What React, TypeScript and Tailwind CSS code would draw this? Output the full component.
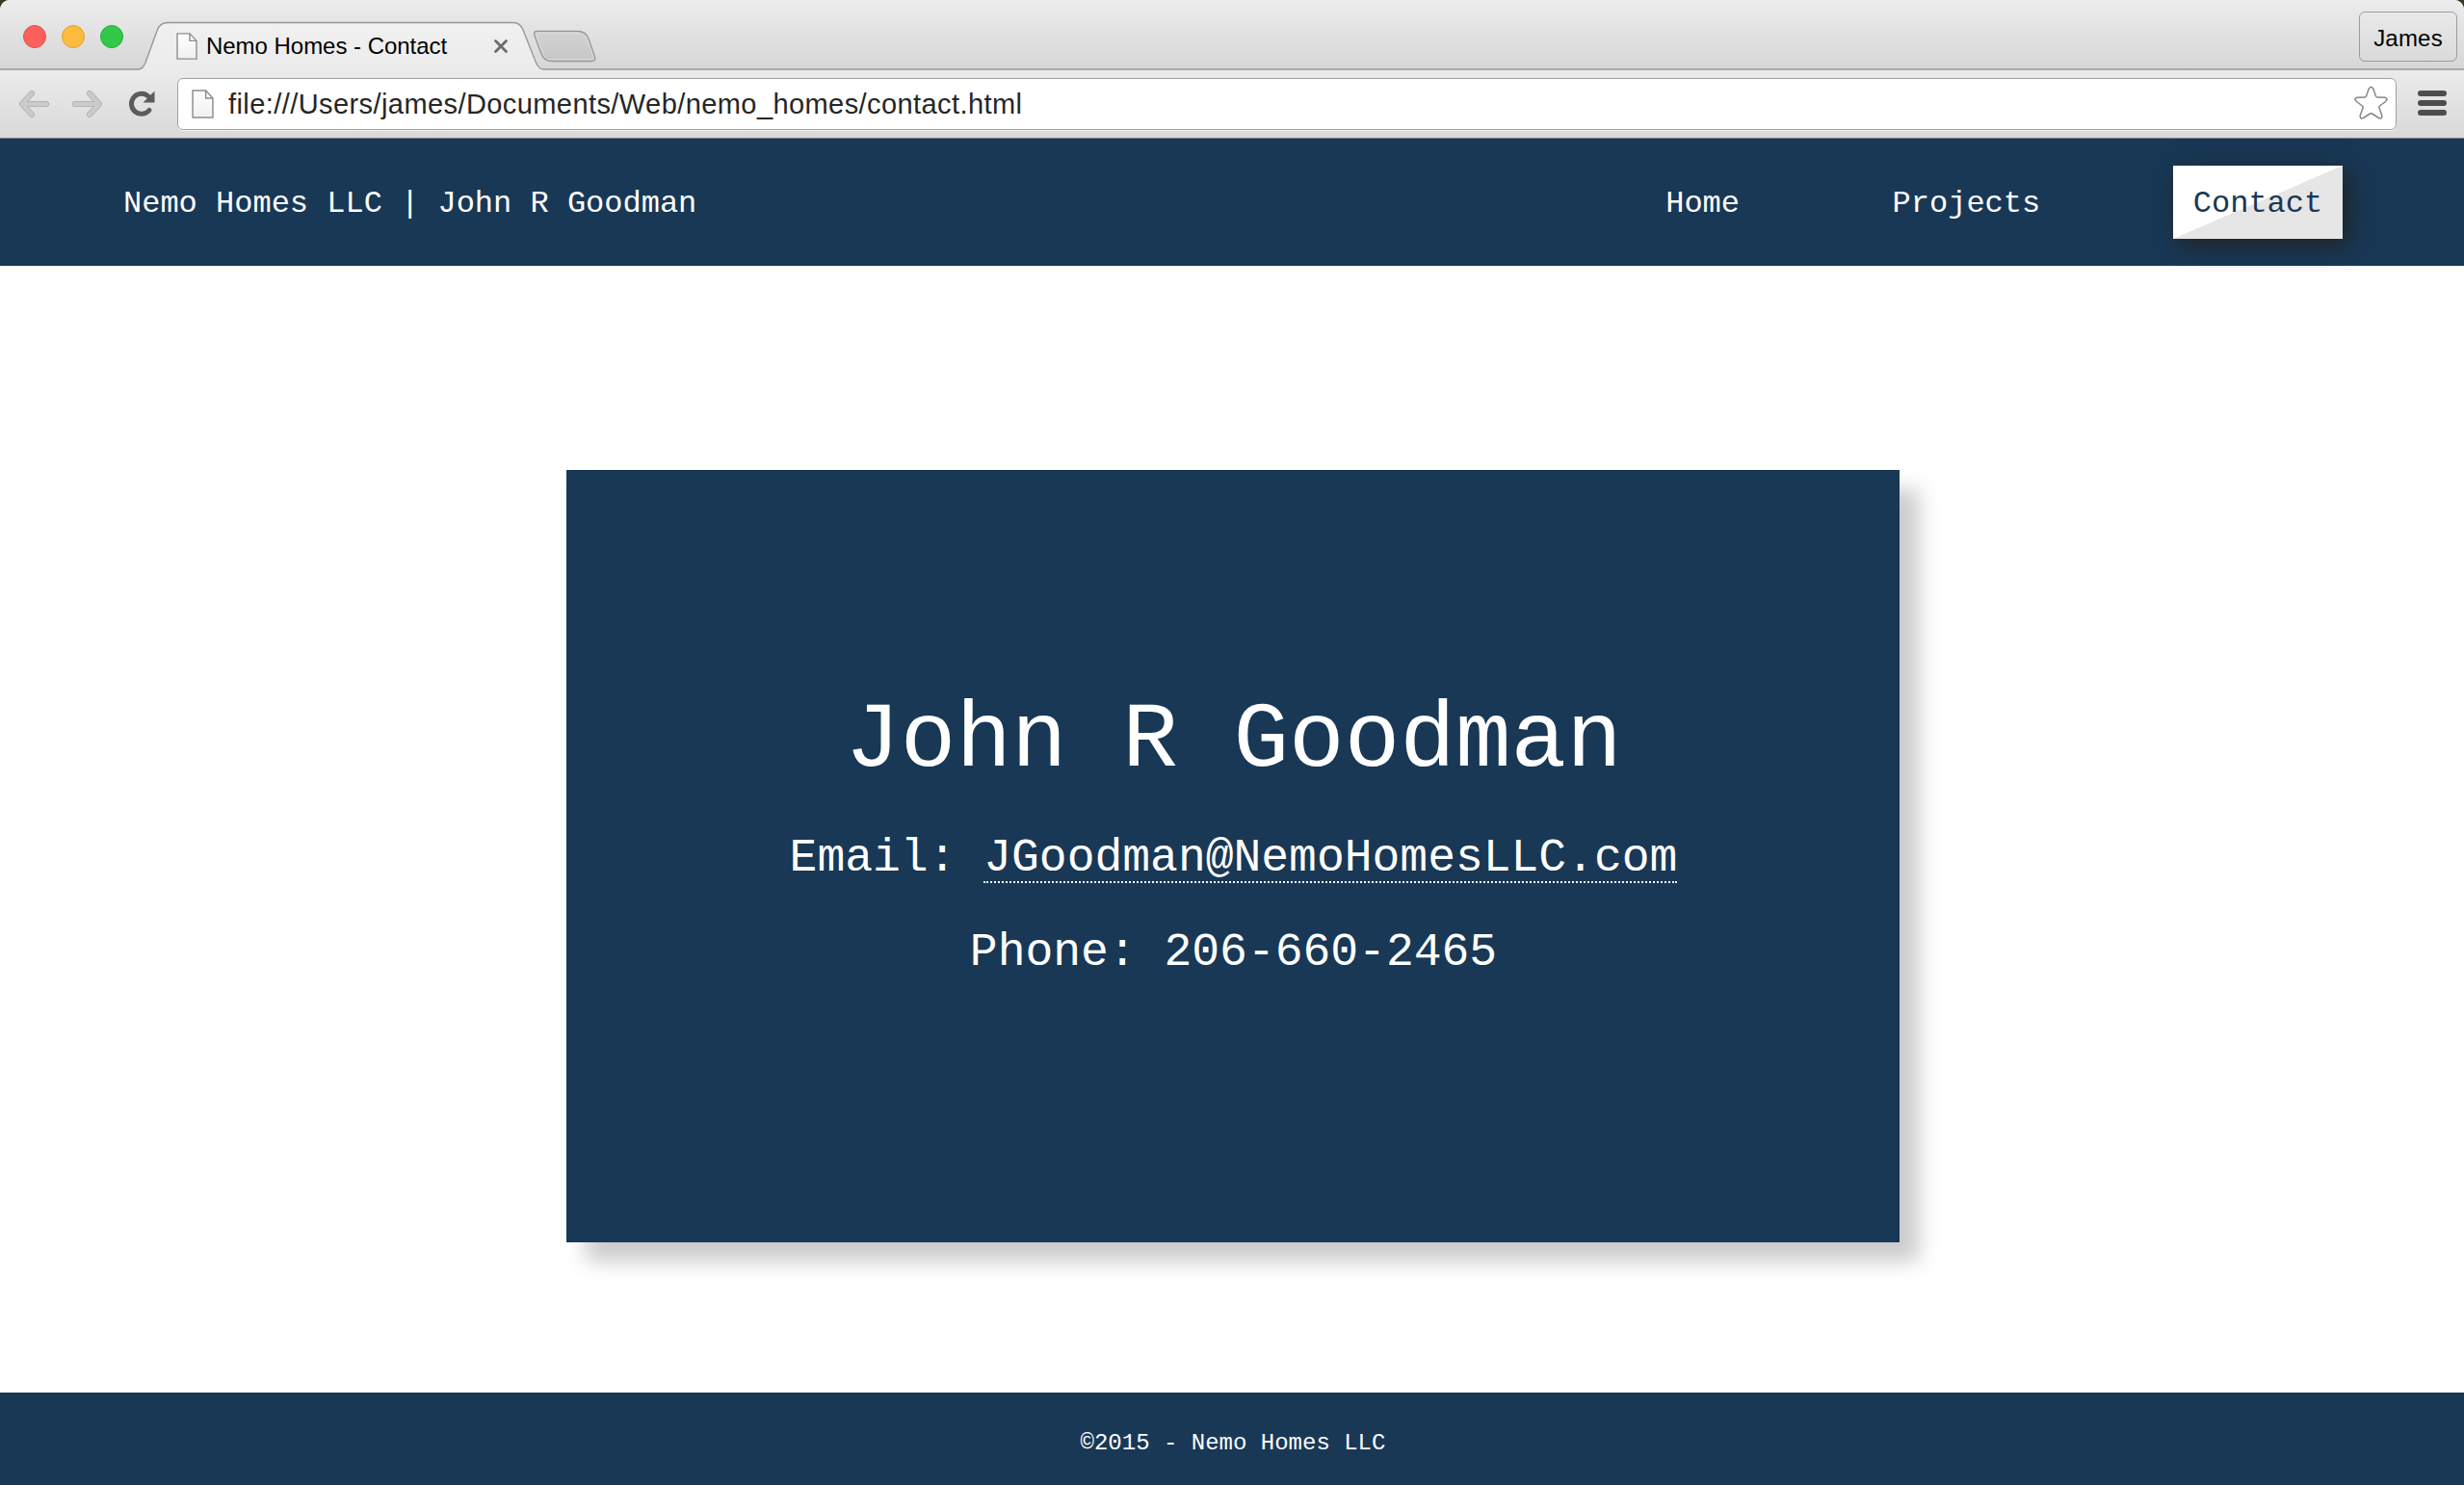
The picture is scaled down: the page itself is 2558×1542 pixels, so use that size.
function PageIcon({ className }: { className: string }) {
  return (
    <svg className={className} viewBox="0 0 22 30" preserveAspectRatio="none">
      <defs>
        <linearGradient id="page" x1="0" y1="0" x2="0" y2="1">
          <stop offset="0" stopColor="#fff" />
          <stop offset="1" stopColor="#f0f0f0" />
        </linearGradient>
      </defs>
      <path d="M1 1H14L21 9V29H1Z" fill="url(#page)" stroke="#8d8d8d" strokeWidth="1.4" />
      <path d="M14 1V9H21" fill="none" stroke="#8d8d8d" strokeWidth="1.4" />
    </svg>
  );
}

function TabStrip() {
  return (
    <div className="relative flex h-[73px] shrink-0 items-center bg-linear-to-b from-[#ececec] to-[#d6d6d6]">
      <svg className="absolute inset-0 h-[73px] w-full" width="2558" height="73">
        <defs>
          <linearGradient id="tab" x1="0" y1="0" x2="0" y2="1">
            <stop offset="0" stopColor="#f1f1f1" />
            <stop offset="1" stopColor="#ebebeb" />
          </linearGradient>
          <linearGradient id="newtab" x1="0" y1="0" x2="0" y2="1">
            <stop offset="0" stopColor="#d3d3d3" />
            <stop offset="1" stopColor="#c6c6c6" />
          </linearGradient>
        </defs>
        <path d="M0 72.5H143C148 72.5 149 69 151 65L163 32C165 26 168 23.5 174 23.5H533C538 23.5 541 26 543 31L556 64C558 69 560 72.5 565 72.5H2558V73H0Z" fill="url(#tab)" />
        <path d="M0 72H143C148 72 149 69 151 65L163 32C165 26 168 23.5 174 23.5H533C538 23.5 541 26 543 31L556 64C558 69 560 72 565 72H2558" fill="none" stroke="#989898" strokeWidth="1.4" />
        <path d="M557 32.500H600C606 32.500 609 35 611 40L617.500 59C618.500 62 617 63.500 614 63.500H573C567 63.500 564 61 562 56L554.800 36.500C554 34 555 32.500 557 32.500Z" fill="url(#newtab)" stroke="#959595" strokeWidth="1.3" />
        <path d="M558 34H600C605 34 607.500 36 609.500 40.500L616 59C616.500 61 616 62 613.500 62H573.500C568.500 62 565.500 60 563.500 55.500L556.300 36.500C556 35 556.500 34 558 34Z" fill="none" stroke="#dedede" strokeWidth="1" />
      </svg>
      <div className="relative ml-6 flex gap-4 pt-[3px]">
        <span className="size-6 rounded-full border border-[#e0504b] bg-[#fc605c]" />
        <span className="size-6 rounded-full border border-[#dea033] bg-[#fdbc40]" />
        <span className="size-6 rounded-full border border-[#27a937] bg-[#34c84a]" />
      </div>
      <PageIcon className="relative ml-[55px] mt-[23px] h-[28px] w-[22px]" />
      <span className="relative ml-[9px] mt-[23px] w-[250px] whitespace-nowrap font-['Liberation_Sans',sans-serif] text-[24px] leading-7 tracking-[-0.03px] text-black">Nemo Homes - Contact</span>
      <svg className="relative ml-[48px] mt-[23px] size-4" viewBox="0 0 16 16">
        <path d="M2.500 2.500L13.500 13.500M13.500 2.500L2.500 13.500" stroke="#6b6b6b" strokeWidth="2.800" strokeLinecap="round" />
      </svg>
      <div className="relative ml-auto mr-[7px] mt-[3px] flex h-[52px] w-[102px] items-center justify-center rounded-md border-[1.5px] border-[#9c9c9c] bg-linear-to-b from-[#e9e9e9] to-[#dadada] pt-[3px] font-['Liberation_Sans',sans-serif] text-[24px] text-black">
        <span className="tracking-[0.2px]">James</span>
      </div>
    </div>
  );
}

function Toolbar() {
  return (
    <div className="flex h-[71px] shrink-0 items-center border-b border-[#7c7c7c] bg-linear-to-b from-[#ebebeb] to-[#d9d9d9]">
      <svg className="ml-5 h-[28px] w-[31px]" viewBox="0 0 31 28">
        <path d="M28 14H4M13 3L3 14L13 25" fill="none" stroke="#adadad" strokeWidth="6" strokeLinecap="round" strokeLinejoin="round" />
        <path d="M28 14H4M13 3L3 14L13 25" fill="none" stroke="#cbcbcb" strokeWidth="4.400" strokeLinecap="round" strokeLinejoin="round" />
      </svg>
      <svg className="ml-6 h-[28px] w-[31px]" viewBox="0 0 31 28">
        <path d="M3 14H27M18 3L28 14L18 25" fill="none" stroke="#adadad" strokeWidth="6" strokeLinecap="round" strokeLinejoin="round" />
        <path d="M3 14H27M18 3L28 14L18 25" fill="none" stroke="#cbcbcb" strokeWidth="4.400" strokeLinecap="round" strokeLinejoin="round" />
      </svg>
      <svg className="ml-[27px] h-[28px] w-[28px]" viewBox="0 0 28 28">
        <path d="M22 20.500A10.500 10.500 0 1 1 21 6" fill="none" stroke="#5c5c5c" strokeWidth="5" strokeLinecap="round" />
        <path d="M27.500 0.500V12.500H15.500Z" fill="#5c5c5c" />
      </svg>
      <div className="mb-px ml-[23px] flex h-[54px] w-[2304px] items-center rounded-md border-[1.5px] border-[#a0a0a0] bg-white shadow-[0_1px_0_#f4f4f4]">
        <PageIcon className="ml-[14px] h-[30px] w-[23px]" />
        <span className="ml-[15px] whitespace-nowrap pt-px font-['Liberation_Sans',sans-serif] text-[29px] leading-8 tracking-[0.42px] text-[#262626]">file:///Users/james/Documents/Web/nemo_homes/contact.html</span>
        <svg className="mb-[2px] ml-auto mr-[8px] h-[35px] w-[35px]" viewBox="0 0 35 35">
          <path d="M15 3.500Q17.500 -.8 20 3.500L22.500 11Q23 12 24 12L32 12.300Q36 13.500 32.500 16.500L26.500 21Q25.500 22 26 23L28.800 31Q29 35 25.500 33.500L18.500 29Q17.500 28.400 16.500 29L9.500 33.500Q6 35 6.200 31L9 23Q9.500 22 8.500 21L2.500 16.500Q-1 13.500 3 12.300L11 12Q12 12 12.500 11Z" fill="#fff" stroke="#868686" strokeWidth="1.5" />
        </svg>
      </div>
      <div className="mb-[2px] ml-[22px] flex flex-col gap-1">
        <span className="h-[6px] w-[30px] rounded-full bg-[#4d4d4d]" />
        <span className="h-[6px] w-[30px] rounded-full bg-[#4d4d4d]" />
        <span className="h-[6px] w-[30px] rounded-full bg-[#4d4d4d]" />
      </div>
    </div>
  );
}

export default function App() {
  return (
    <div className="flex h-[1542px] w-[2558px] flex-col overflow-hidden bg-[#2e3b25]">
      <div className="flex h-full flex-col overflow-hidden rounded-t-[10px] bg-white">
        <TabStrip />
        <Toolbar />
        <div className="flex grow flex-col font-['Courier_New','Liberation_Mono',monospace] text-[32px] text-white">
          <header className="flex h-[132px] shrink-0 items-center justify-between bg-[#183856] pl-32 pr-[126px]">
            <span className="whitespace-pre pt-1">Nemo Homes LLC | John R Goodman</span>
            <nav className="flex items-center gap-[117px]">
              <a className="flex h-[76px] items-center px-[20.8px] pt-1">Home</a>
              <a className="flex h-[76px] items-center px-[20.8px] pt-1">Projects</a>
              <a className="flex h-[76px] w-[176px] items-center justify-center bg-[linear-gradient(to_bottom_right,#fff_50%,#e6e6e6_50%)] pt-1 text-[#183856] shadow-[6px_6px_24px_#222]">Contact</a>
            </nav>
          </header>
          <main className="flex grow justify-center pl-[2px] pt-[212px]">
            <section className="flex h-[802px] w-[1384px] flex-col items-center bg-[#183856] pl-px pt-[227px] shadow-[20px_20px_20px_#ccc]">
              <h1 className="text-[96px] leading-[110px]">John R Goodman</h1>
              <p className="mt-[38px] text-[48px] leading-[56px]">
                Email: <a className="inline-block border-b-2 border-dotted border-white leading-[48px]">JGoodman@NemoHomesLLC.com</a>
              </p>
              <p className="mt-[42px] text-[48px] leading-[56px]">Phone: 206-660-2465</p>
            </section>
          </main>
          <footer className="flex h-[96px] shrink-0 items-center justify-center bg-[#183856] pl-[2px] pt-[10px] text-[24px]">©2015 - Nemo Homes LLC</footer>
        </div>
      </div>
    </div>
  );
}
